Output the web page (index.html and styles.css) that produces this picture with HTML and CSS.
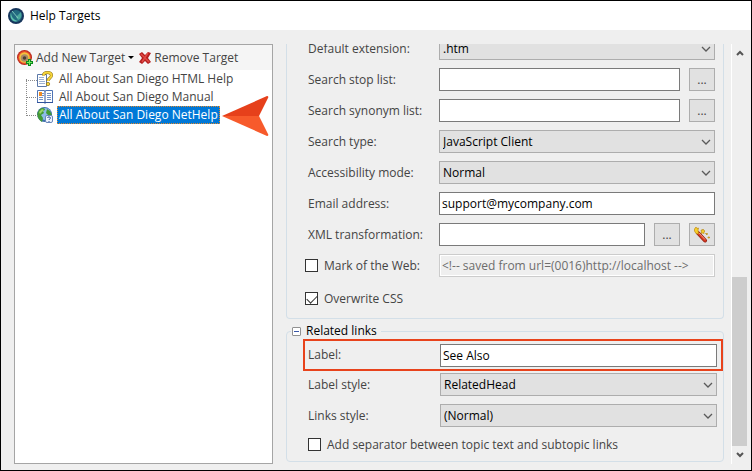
FILE: index.html
```html
<!DOCTYPE html>
<html lang="en">
<head>
<meta charset="utf-8">
<title>Help Targets</title>
<link rel="stylesheet" href="styles.css">
</head>
<body>
<svg class="defs" aria-hidden="true">
  <symbol id="chevron" viewBox="0 0 10 6"><path d="M1 1l4 4 4-4" fill="none" stroke="#5a5a5a" stroke-width="1.3"/></symbol>
</svg>
<div class="window">
  <header class="titlebar">
    <svg class="icon" viewBox="0 0 16 16" aria-hidden="true">
      <circle cx="8" cy="8" r="8" fill="#17365c"/>
      <circle cx="8" cy="8" r="6" fill="#236a80"/>
      <path d="M3 4c0 4 2 8 7 9-5 2-9-3-7-9z" fill="#5fc0ac"/>
      <path d="M8 9l5-5c1 4 0 7-3 8z" fill="#4aa79c"/>
      <path d="M4 3l6 7" stroke="#7fc4bb" stroke-width="1"/>
    </svg>
    <h1>Help Targets</h1>
  </header>
  <main class="content">
    <section class="targets">
      <div class="toolbar">
        <button class="tool add" type="button">
          <svg class="icon" viewBox="0 0 16 16" aria-hidden="true">
            <circle cx="7.500" cy="7.500" r="7.500" fill="#b8281b"/>
            <circle cx="7.500" cy="7.500" r="6.500" fill="#e9502c"/>
            <circle cx="7.500" cy="7.500" r="5.300" fill="#f5c23c"/>
            <circle cx="7.500" cy="8" r="3.800" fill="#a98a66"/>
            <circle cx="7.500" cy="8" r="1.800" fill="#4a4036"/>
            <path d="M11 9h3v2h2v3h-2v2h-3v-2H9v-3h2z" fill="#0b8a1c"/>
            <path d="M12 10h1v2h2v1h-2v2h-1v-2h-2v-1h2z" fill="#6fe85c"/>
          </svg>
          <span>Add New Target</span>
          <svg class="caret" viewBox="0 0 6 3" aria-hidden="true"><path d="M0 0h6L3 3z"/></svg>
        </button>
        <button class="tool" type="button">
          <svg class="cross" viewBox="0 0 12 12" aria-hidden="true">
            <path d="M0 2l3-2 3 3 3-3 3 1-3 5 3 4-3 2-3-3-3 3-3-2 3-4z" fill="#b51f1f"/>
            <path d="M2 2l8 8M9 1L3 10" stroke="#e04a45" stroke-width="1.500"/>
          </svg>
          <span>Remove Target</span>
        </button>
      </div>
      <ul class="tree">
        <li>
          <svg class="icon" viewBox="0 0 16 16" aria-hidden="true">
            <path d="M.5 3.500h9v12h-9z" fill="#fff" stroke="#5b78a8"/>
            <path d="M2 6.500h5M2 8.500h5M2 10.500h6M2 12.500h6" stroke="#9bb0d2"/>
            <path d="M6.500 4.500C6.500 2 8.500 1.500 10.500 1.500c3 0 4 1.500 4 3 0 2.500-3.500 2.500-3.500 5.500" fill="none" stroke="#8a6d16" stroke-width="3"/>
            <path d="M6.500 4.500C6.500 2 8.500 1.500 10.500 1.500c3 0 4 1.500 4 3 0 2.500-3.500 2.500-3.500 5.500" fill="none" stroke="#f6d63c" stroke-width="2"/>
            <circle cx="11" cy="13" r="1.700" fill="#f6d63c" stroke="#8a6d16" stroke-width=".7"/>
          </svg>
          <a href="#html-help">All About San Diego HTML Help</a>
        </li>
        <li>
          <svg class="icon" viewBox="0 0 16 16" aria-hidden="true">
            <path d="M.5 1.500h7l.5 1 .5-1h7v12h-7l-.5 1-.5-1h-7z" fill="#fff" stroke="#4f74b5"/>
            <path d="M8 2v12M0 13.500h16" stroke="#30539b"/>
            <path d="M5 4.500h2M5 6.500h2M2 8.500h4M2 10.500h4M10 4.500h4M10 6.500h4M10 8.500h4M10 10.500h4" stroke="#7290c4"/>
            <path d="M2 3h3v4H2z" fill="#ee8b24"/>
          </svg>
          <a href="#manual">All About San Diego Manual</a>
        </li>
        <li>
          <svg class="icon" viewBox="0 0 16 16" aria-hidden="true">
            <circle cx="7.500" cy="7.500" r="7.500" fill="#3f6fae"/>
            <circle cx="8" cy="7" r="6" fill="#8dbbe8"/>
            <path d="M2 3c3-3 6-2 6 0L6 4l1 2-3 2 2 3-1 4C1 12 0 9 .5 6zM10 2l3 2 2 4-1 2-3-2-2-2z" fill="#429a35"/>
            <path d="M2 5l3-3 2 1-4 4z" fill="#9ad36a"/>
            <rect x="8.500" y="8.500" width="7" height="7" rx="1.500" fill="#eef4fd" stroke="#6a87bb"/>
            <path d="M10.500 11c0-1.500 3-1.500 3 0 0 1-1.500 1-1.500 2M12 14v1" stroke="#2b4fa0" fill="none"/>
          </svg>
          <a class="selected" href="#nethelp">All About San Diego NetHelp</a>
          <svg class="pointer" viewBox="0 0 47 41" aria-hidden="true">
            <path d="M0 20L45 0q2 0 1 2L37 20z" fill="#e6401b"/>
            <path d="M0 20h37l9 18q1 2-1 2z" fill="#f75a2b"/>
          </svg>
        </li>
      </ul>
    </section>

    <form class="pane">
      <fieldset class="group general">
        <div class="row">
          <label for="ext">Default extension:</label>
          <span class="pick"><select id="ext"><option>.htm</option></select><svg><use href="#chevron"/></svg></span>
        </div>
        <div class="row">
          <label for="stop">Search stop list:</label>
          <input id="stop" type="text"><button class="more" type="button">...</button>
        </div>
        <div class="row">
          <label for="syn">Search synonym list:</label>
          <input id="syn" type="text"><button class="more" type="button">...</button>
        </div>
        <div class="row">
          <label for="type">Search type:</label>
          <span class="pick"><select id="type"><option>JavaScript Client</option></select><svg><use href="#chevron"/></svg></span>
        </div>
        <div class="row">
          <label for="access">Accessibility mode:</label>
          <span class="pick"><select id="access"><option>Normal</option></select><svg><use href="#chevron"/></svg></span>
        </div>
        <div class="row">
          <label for="email">Email address:</label>
          <input id="email" type="text" value="support@mycompany.com">
        </div>
        <div class="row">
          <label for="xml">XML transformation:</label>
          <input id="xml" type="text"><button class="more" type="button">...</button>
          <button class="more" type="button" aria-label="Wizard">
            <svg class="icon" viewBox="0 0 16 16" aria-hidden="true">
              <path d="M4 6l7 7.500" stroke="#8f1f12" stroke-width="4" stroke-linecap="round"/>
              <path d="M4 6l7 7.500" stroke="#d93a22" stroke-width="2.500" stroke-linecap="round"/>
              <path d="M5 6l6 6.500" stroke="#f59a80"/>
              <path d="M2 0l1 1.500L4.500 1l-.5 2 .5 4L2 6.500.5 4 .5 2z" fill="#f6cf2a" stroke="#c08a10" stroke-width=".7"/>
              <path d="M7 3l1.500 0L9 2l.7 1.300L11 4l-1 1v1.500L8.500 6 7 6.500 7.500 5zM11.500 6.500l2 0-.5 1.500zM14 10h1.500v1h-1.500z" fill="#f6cf2a" stroke="#b98a18" stroke-width=".7"/>
            </svg>
          </button>
        </div>
        <div class="row">
          <label class="check"><input type="checkbox"><span>Mark of the Web:</span></label>
          <input type="text" aria-label="Mark of the Web" value="&lt;!-- saved from url=(0016)http://localhost --&gt;" disabled>
        </div>
        <div class="row last">
          <label class="check"><input type="checkbox" checked><span>Overwrite CSS</span></label>
        </div>
      </fieldset>

      <fieldset class="group related">
        <legend>
          <button class="toggle" type="button" aria-label="Collapse"></button>Related links
        </legend>
        <div class="row highlight">
          <label for="label">Label:</label>
          <input id="label" type="text" value="See Also">
        </div>
        <div class="row">
          <label for="lstyle">Label style:</label>
          <span class="pick"><select id="lstyle"><option>RelatedHead</option></select><svg><use href="#chevron"/></svg></span>
        </div>
        <div class="row">
          <label for="kstyle">Links style:</label>
          <span class="pick"><select id="kstyle"><option>(Normal)</option></select><svg><use href="#chevron"/></svg></span>
        </div>
        <div class="row">
          <label class="check wide"><input type="checkbox"><span>Add separator between topic text and subtopic links</span></label>
        </div>
      </fieldset>
    </form>

    <div class="scrollbar" aria-hidden="true">
      <svg class="arrow" viewBox="0 0 8 6"><path d="M1 5l3-3 3 3" fill="none" stroke="#555" stroke-width="2"/></svg>
      <div class="track"><div class="thumb"></div></div>
      <svg class="arrow" viewBox="0 0 8 6"><path d="M1 1l3 3 3-3" fill="none" stroke="#555" stroke-width="2"/></svg>
    </div>
  </main>
</div>
</body>
</html>
```
FILE: styles.css
```css
* { box-sizing: border-box; }
body {
  margin: 0;
  font: 12px/16px "Open Sans", "Noto Sans", sans-serif;
  color: #444;
}
button, input, select { font: inherit; color: #000; margin: 0; }
.defs { display: none; }
svg { display: block; flex: none; }
.icon { width: 16px; height: 16px; }

.window {
  display: flex;
  flex-direction: column;
  height: 100vh;
  border: 1px solid #000;
  background: #efefef;
}
.titlebar {
  display: flex;
  align-items: center;
  gap: 6px;
  height: 29px;
  padding-left: 7px;
  background: #fff;
  color: #000;
}
.titlebar h1 { margin: 0; font-size: 12px; font-weight: 400; }
.content {
  flex: 1;
  min-height: 0;
  display: flex;
  padding: 14px 4px 6px 13px;
}

.targets {
  flex: 0 1 259px;
  border: 1px solid #a5a5a5;
  background: #fff;
}
.toolbar {
  display: flex;
  align-items: center;
  gap: 5px;
  height: 25px;
  padding-left: 2px;
  background: #f5f5f5;
}
.tool {
  display: flex;
  align-items: center;
  gap: 3px;
  padding: 0;
  border: 0;
  background: none;
  color: #444;
  white-space: nowrap;
}
.caret { width: 6px; height: 3px; }
.cross { width: 12px; height: 12px; }

.tree { margin: 0; padding: 0 0 0 11px; list-style: none; }
.tree li {
  position: relative;
  display: flex;
  align-items: center;
  gap: 4px;
  height: 18px;
  padding-left: 11px;
}
.tree li::before {
  content: "";
  position: absolute;
  left: 0;
  top: -9px;
  width: 11px;
  height: 18px;
  border: dotted #8a8a8a;
  border-width: 0 0 1px 1px;
}
.tree li:first-child::before { top: 9px; height: 1px; border-left: 0; }
.tree a {
  padding: 0 1px;
  border: 1px solid transparent;
  color: #444;
  text-decoration: none;
  white-space: nowrap;
}
.tree a.selected { background: #0078d7; border: 1px dotted #e58a2b; color: #fff; }
.pointer { position: absolute; left: 196px; top: -10px; width: 47px; height: 41px; }

.pane {
  flex: 1;
  min-width: 0;
  display: flex;
  flex-direction: column;
  justify-content: flex-end;
  overflow: hidden;
  padding: 0 7px 2px 13px;
}
.group {
  flex: none;
  min-width: 0;
  margin: 0;
  border: 1px solid #d3dfe8;
  border-radius: 4px;
}
.general { padding: 0 8px 8px 18px; border-top: 0; }
.related { margin-top: 4px; padding: 0 0 7px 16px; }
.row { display: flex; align-items: center; height: 23px; margin-bottom: 8px; }
.row > label { flex: 0 0 134px; padding-left: 3px; white-space: nowrap; }
.row.last { height: 25px; margin: 0; padding-top: 2px; }
.row > input, .pick { flex: 1; min-width: 0; height: 23px; }
.row > input { padding: 0 2px; border: 1px solid #7a7a7a; border-radius: 0; background: #fff; }
.row > input:disabled {
  border-color: #ccc;
  background: #efefef;
  box-shadow: inset 0 0 0 1px #fff;
  color: #6d6d6d;
}
.pick { position: relative; }
.pick select {
  appearance: none;
  display: block;
  width: 100%;
  height: 23px;
  padding: 0 20px 0 3px;
  border: 1px solid #adadad;
  border-radius: 0;
  background: #e1e1e1;
}
.pick svg { position: absolute; right: 4px; top: 9px; width: 10px; height: 6px; pointer-events: none; }
.more {
  display: flex;
  align-items: center;
  justify-content: center;
  flex: none;
  width: 26px;
  height: 23px;
  margin-left: 9px;
  padding: 0;
  border: 1px solid #adadad;
  background: #e1e1e1;
  color: #444;
}
.row > .check { display: flex; align-items: center; gap: 6px; padding-left: 0; }
.row > .wide { padding-left: 5px; }
.check input {
  appearance: none;
  width: 13px;
  height: 13px;
  border: 1px solid #333;
  background: #fff;
}
.check input:checked::after {
  content: "";
  display: block;
  width: 9px;
  height: 5px;
  margin: 2px 0 0 1px;
  border: solid #333;
  border-width: 0 0 1px 1px;
  transform: rotate(-45deg);
}

legend {
  display: flex;
  align-items: center;
  gap: 5px;
  margin-left: -12px;
  padding: 0 4px 0 1px;
  color: #000;
}
.toggle {
  display: flex;
  align-items: center;
  justify-content: center;
  width: 9px;
  height: 9px;
  padding: 0;
  border: 1px solid #919191;
  border-radius: 1px;
  background: #fff;
}
.toggle::before { content: ""; width: 5px; height: 1px; background: #3a57a8; }
.related .row { padding-right: 6px; }
.related .row > label { flex-basis: 137px; padding-left: 5px; }
.related .row.highlight {
  height: 32px;
  margin-bottom: 2px;
  padding-right: 4px;
  border: 2px solid #e8431c;
}
.related .highlight > label { flex-basis: 135px; padding-left: 3px; }
.related .row:last-child { height: 19px; margin: 0; }

.scrollbar {
  flex: 0 0 16px;
  display: flex;
  flex-direction: column;
  align-items: center;
  border-left: 1px solid #fff;
}
.arrow { width: 8px; height: 6px; margin: 6px 0; }
.track {
  flex: 1;
  align-self: stretch;
  display: flex;
  flex-direction: column;
  justify-content: flex-end;
}
.thumb { height: 44%; background: #cdcdcd; }
```
